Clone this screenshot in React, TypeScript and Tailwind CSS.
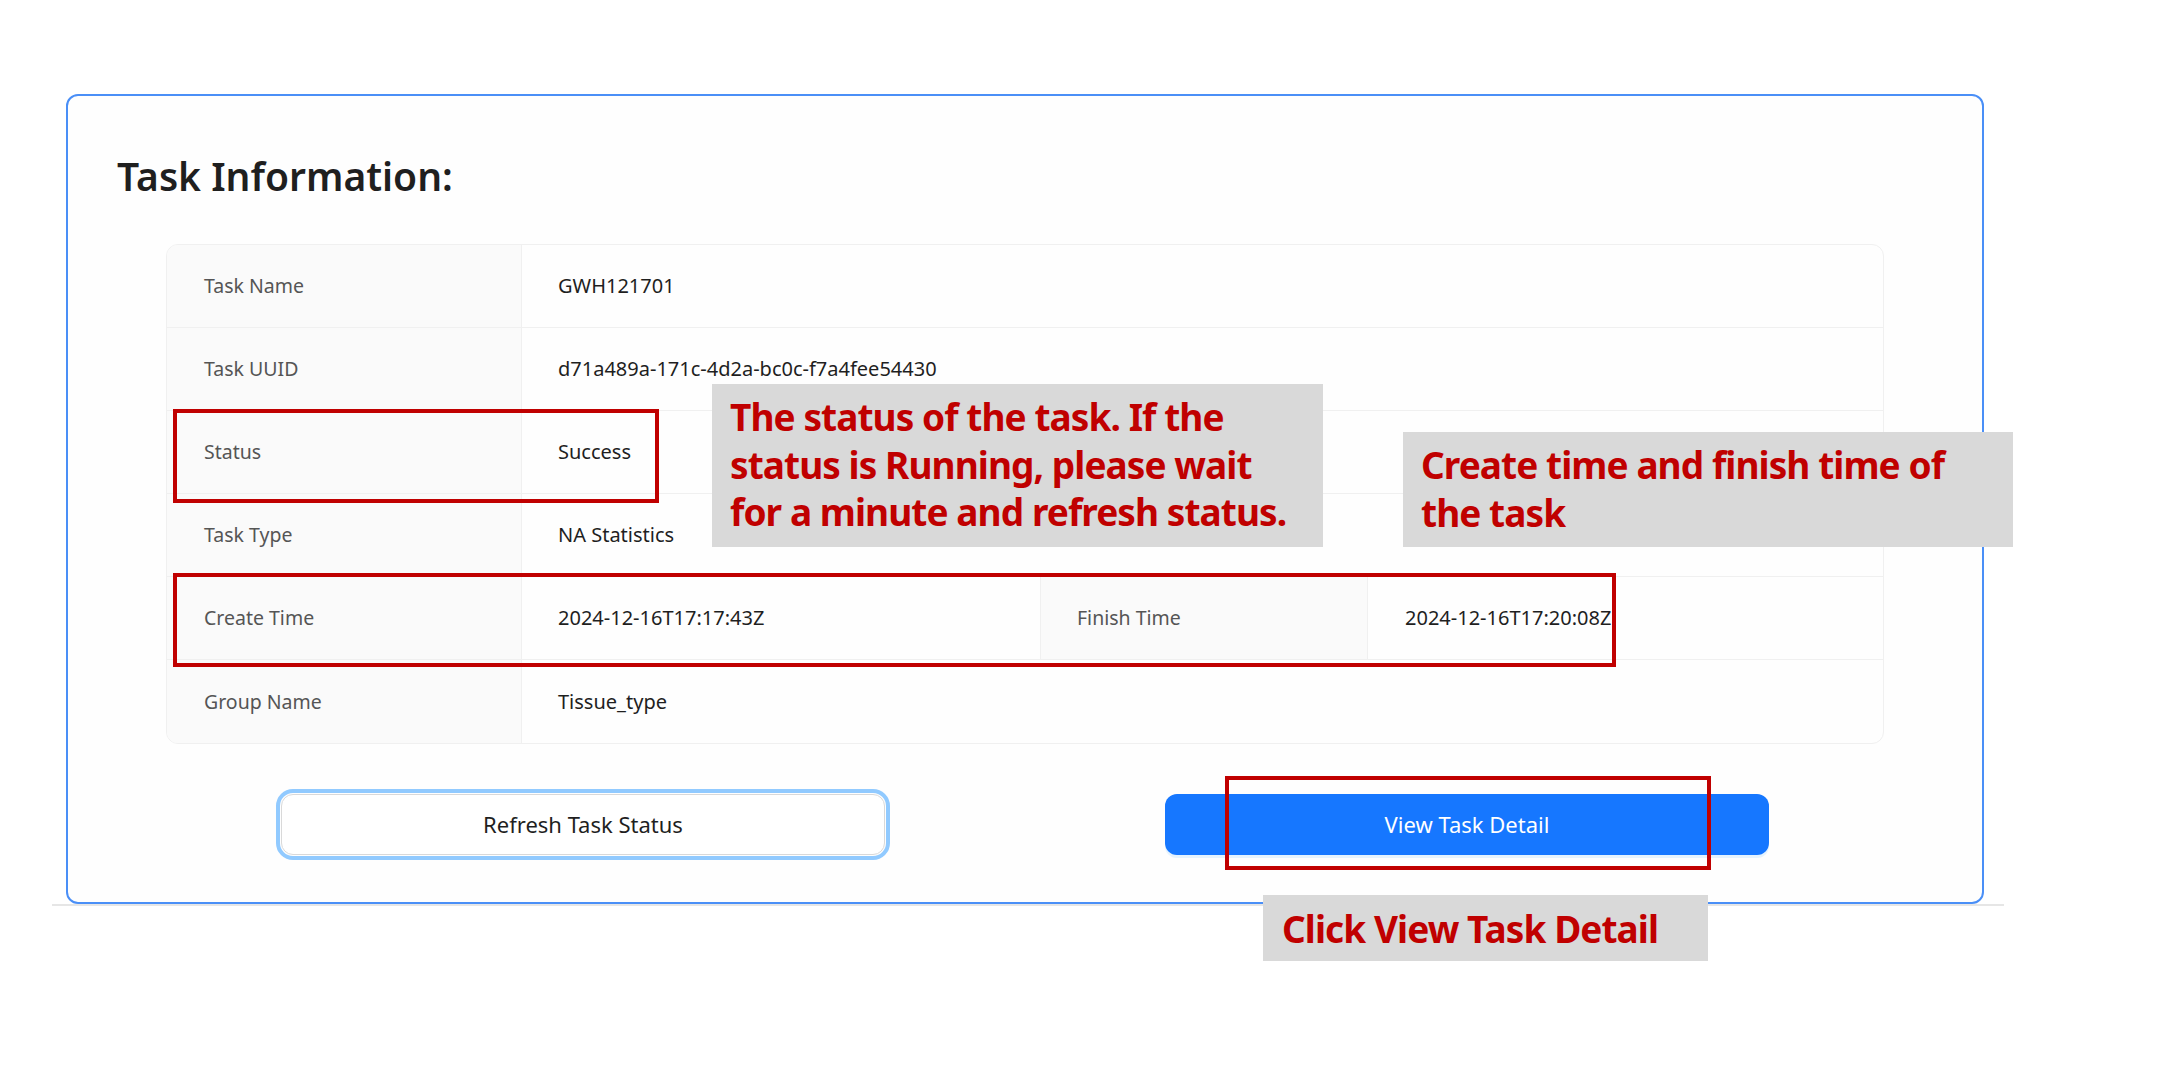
import React from 'react';

const rows: { label: string; value: string; label2?: string; value2?: string }[] = [
  { label: 'Task Name', value: 'GWH121701' },
  { label: 'Task UUID', value: 'd71a489a-171c-4d2a-bc0c-f7a4fee54430' },
  { label: 'Status', value: 'Success' },
  { label: 'Task Type', value: 'NA Statistics' },
  {
    label: 'Create Time',
    value: '2024-12-16T17:17:43Z',
    label2: 'Finish Time',
    value2: '2024-12-16T17:20:08Z',
  },
  { label: 'Group Name', value: 'Tissue_type' },
];

function TaskTable() {
  return (
    <div className="grid grid-cols-[355px_519px_327px_1fr] overflow-hidden rounded-[12px] border border-[#f0f0f0]">
      {rows.map((row, i) => {
        const last = i === rows.length - 1;
        const line = last ? '' : 'border-b border-[#f0f0f0]';
        return (
          <React.Fragment key={row.label}>
            <div
              className={`flex h-[83px] items-center border-r border-[#f0f0f0] bg-[#fafafa] pl-[37px] text-[19.5px] text-[#555555] ${line}`}
            >
              {row.label}
            </div>
            {row.label2 ? (
              <>
                <div
                  className={`flex h-[83px] items-center border-r border-[#f0f0f0] pl-[36px] text-[20px] text-[#1f1f1f] ${line}`}
                >
                  {row.value}
                </div>
                <div
                  className={`flex h-[83px] items-center border-r border-[#f0f0f0] bg-[#fafafa] pl-[36px] text-[19.5px] text-[#555555] ${line}`}
                >
                  {row.label2}
                </div>
                <div className={`flex h-[83px] items-center pl-[37px] text-[20px] text-[#1f1f1f] ${line}`}>
                  {row.value2}
                </div>
              </>
            ) : (
              <div className={`col-span-3 flex h-[83px] items-center pl-[36px] text-[20px] text-[#1f1f1f] ${line}`}>
                {row.value}
              </div>
            )}
          </React.Fragment>
        );
      })}
    </div>
  );
}

export default function App() {
  return (
    <div className="relative h-[1068px] w-full overflow-hidden bg-white font-['Noto_Sans',sans-serif]">
      <div className="ml-[52px] w-[1952px] border-b-2 border-[#e6e6e6] pt-[94px]">
        <div className="ml-[14px] mr-[20px] rounded-[12px] border-2 border-[#4a8ff7] bg-[#fefefe] px-[49px] pb-[47px] pt-[54px]">
          <h2 className="mb-[42px] text-[39px] font-semibold leading-[52px] text-[#1f1f1f]">Task Information:</h2>
          <div className="mx-[49px]">
            <TaskTable />
            <div className="mt-[50px] grid grid-cols-2 gap-[280px] px-[115px]">
              <button className="h-[61px] rounded-[12px] border border-[#d9d9d9] bg-white text-[22px] text-[#1f1f1f] outline-4 outline-offset-1 outline-[#91caff]">
                Refresh Task Status
              </button>
              <button className="h-[61px] rounded-[12px] bg-[#1677ff] text-[22px] text-white shadow-[0_3px_0_rgba(5,145,255,0.1)]">
                View Task Detail
              </button>
            </div>
          </div>
        </div>
      </div>

      {/* annotation overlays */}
      <div className="absolute left-[173px] top-[409px] h-[94px] w-[486px] border-4 border-[#c00000]" />
      <div className="absolute left-[173px] top-[573px] h-[94px] w-[1443px] border-4 border-[#c00000]" />
      <div className="absolute left-[1225px] top-[776px] h-[94px] w-[486px] border-4 border-[#c00000]" />

      <div className="absolute left-[712px] top-[384px] h-[163px] w-[611px] bg-[#d9d9d9] pl-[18px] pt-[9px] text-[37px] font-bold leading-[47.5px] tracking-[-0.025em] text-[#c00000]">
        The status of the task. If the
        <br />
        status is Running, please wait
        <br />
        for a minute and refresh status.
      </div>
      <div className="absolute left-[1403px] top-[432px] h-[115px] w-[610px] bg-[#d9d9d9] pl-[18px] pt-[9px] text-[37px] font-bold leading-[47.5px] tracking-[-0.025em] text-[#c00000]">
        Create time and finish time of
        <br />
        the task
      </div>
      <div className="absolute left-[1263px] top-[895px] h-[66px] w-[445px] bg-[#d9d9d9] pl-[19px] pt-[10px] text-[37px] font-bold leading-[47.5px] tracking-[-0.025em] text-[#c00000]">
        Click View Task Detail
      </div>
    </div>
  );
}
